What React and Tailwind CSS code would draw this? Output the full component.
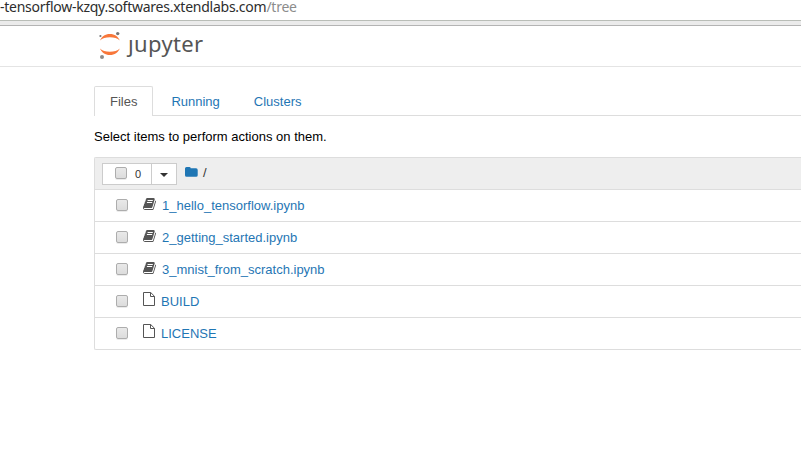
function Logo() {
  return (
    <svg className="h-7 w-[24px] shrink-0" viewBox="0 0 24 28">
      <path d="M2 9.500C3.400 5.700 7.200 3 11.900 3s8.500 2.700 9.900 6.500C19.600 7.400 16 6.300 11.900 6.300S4.200 7.400 2 9.500z" fill="#f8773a" />
      <path d="M2 17.600c1.400 3.800 5.200 6.500 9.900 6.500s8.500-2.700 9.900-6.500c-2.200 2.100-5.800 3.200-9.900 3.200S4.200 19.700 2 17.600z" fill="#f8773a" />
      <circle cx="19.700" cy="2.600" r="1.700" fill="#767677" />
      <circle cx="2.400" cy="5" r="1.100" fill="#767677" />
      <circle cx="4" cy="25.900" r="2" fill="#8c8c8c" />
    </svg>
  );
}

function Book() {
  return (
    <svg className="h-[14px] w-[13px]" viewBox="0 0 1664 1792" fill="#555">
      <path d="M1639 478q40 57 18 129l-275 906q-19 64-76.5 107.5t-122.5 43.5h-923q-77 0-148.500-53.500t-99.500-131.500q-24-67-2-127 0-4 3-27t4-37q1-8-3-21.500t-3-19.500q2-11 8-21t16.500-23.500 16.500-23.500q23-38 45-91.500t30-91.500q3-10 .5-30t-.5-28q3-11 17-28t17-23q21-36 42-92t25-90q1-9-2.500-32t.5-28q4-13 22-30.500t22-22.500q19-26 42.500-84.500t27.500-96.500q1-8-3-25.500t-2-26.500q2-8 9-18t18-23 17-21q8-12 16.500-30.500t15-35 16-36 19.500-32 26.500-23.500 36-11.500 47.500 5.500l-1 3q38-9 51-9h761q74 0 114 56t18 130l-274 906q-36 119-71.500 153.500t-128.500 34.500h-869q-27 0-38 15-11 16-1 43 24 70 144 70h923q29 0 56-15.500t35-41.500l300-987q7-22 5-57 38 15 59 43zm-1064 2q-4 13 2 22.500t20 9.500h608q13 0 25.500-9.500t16.500-22.500l21-64q4-13-2-22.500t-20-9.500h-608q-13 0-25.500 9.500t-16.500 22.500zm-83 256q-4 13 2 22.500t20 9.500h608q13 0 25.500-9.500t16.500-22.500l21-64q4-13-2-22.500t-20-9.500h-608q-13 0-25.500 9.500t-16.500 22.500z" />
    </svg>
  );
}

function File() {
  return (
    <svg className="h-[14px] w-[12px]" viewBox="0 0 12 14" fill="none" stroke="#555">
      <path d="M.5.5h7.200l3.800 3.800v9.200H.5zM7.500.5v4h4" />
    </svg>
  );
}

function Folder() {
  return (
    <svg className="h-[10px] w-[13px]" viewBox="0 0 13 10" fill="#1f76b4">
      <path d="M0 1.500Q0 0 1.500 0h2.800Q5.700 0 5.700 1.300h5.400q1.600 0 1.600 1.600v5.300q0 1.600-1.600 1.600H1.600Q0 9.800 0 8.200z" />
    </svg>
  );
}

function Checkbox() {
  return <span className="block size-3 shrink-0 rounded-[2px] border border-[#adadad] bg-linear-to-b from-[#e9e9e9] to-[#dcdcdc] shadow-[0_1px_0_rgba(0,0,0,0.08)]" />;
}

const files = [
  { name: "1_hello_tensorflow.ipynb", notebook: true },
  { name: "2_getting_started.ipynb", notebook: true },
  { name: "3_mnist_from_scratch.ipynb", notebook: true },
  { name: "BUILD", notebook: false },
  { name: "LICENSE", notebook: false },
];

export default function App() {
  return (
    <div className="h-[450px] w-[801px] bg-white font-['Liberation_Sans',Arial,sans-serif] text-[13px] leading-5 text-black">
      <div className="h-5 whitespace-nowrap font-['Noto_Sans',sans-serif] text-[14px] leading-[14px] tracking-[-0.25px] text-[#2d2d2d]">
        -tensorflow-kzqy.softwares.xtendlabs.com<span className="text-[#8c8c8c]">/tree</span>
      </div>
      <div className="h-1.5 border-y border-t-[#b9bdb7] border-b-[#b4b4b4] bg-[#ebebeb]" />
      <header className="flex h-[41px] items-start border-b border-[#e4e4e4] pl-[98px] pt-[5px]">
        <Logo />
        <span className="-mt-px ml-[6px] font-['Noto_Sans',sans-serif] text-[22px] leading-[26px] tracking-[0.35px] text-[#555]">ȷupyter</span>
      </header>
      <main className="pl-[94px] pt-[19px]">
        <nav className="flex h-[30px] border-b border-[#ddd]">
          <span className="h-[30px] w-[59px] rounded-t-[2px] border border-b-0 border-[#ddd] bg-white pl-[15px] pt-[5px] text-[#555]">Files</span>
          <span className="ml-[18.4px] pt-[6px] text-[#1f76b4]">Running</span>
          <span className="ml-[34px] pt-[6px] text-[#1f76b4]">Clusters</span>
        </nav>
        <p className="mt-[11px] h-5">Select items to perform actions on them.</p>
        <section className="mt-[10px] rounded-l-[2px] border border-r-0 border-[#ddd]">
          <div className="flex h-8 border-b border-[#ddd] bg-[#eee] pl-[7px] pt-[5px]">
            <div className="flex h-[22px] w-[75px] border border-[#ccc] bg-white">
              <div className="flex w-[49px] items-start border-r border-[#ccc] pl-3 pt-[3px]">
                <Checkbox />
                <span className="ml-[8px] text-[11px] leading-[15px] text-[#333]">0</span>
              </div>
              <span className="ml-[8px] mt-[9px] h-0 w-0 border-x-4 border-t-4 border-x-transparent border-t-[#333]" />
            </div>
            <span className="ml-[8px] mt-[4px]"><Folder /></span>
            <span className="ml-[5px] text-[#333]">/</span>
          </div>
          {files.map((file) => (
            <div key={file.name} className="flex h-8 border-b border-[#ddd] pl-[21px] last:h-[31px] last:border-b-0">
              <span className="mt-[9px]"><Checkbox /></span>
              <span className={file.notebook ? "ml-[15px] mt-[7px] w-[19px]" : "ml-[15px] mt-[6px] w-[18px]"}>
                {file.notebook ? <Book /> : <File />}
              </span>
              <span className="mt-[6px] text-[#1f76b4]">{file.name}</span>
            </div>
          ))}
        </section>
      </main>
    </div>
  );
}
